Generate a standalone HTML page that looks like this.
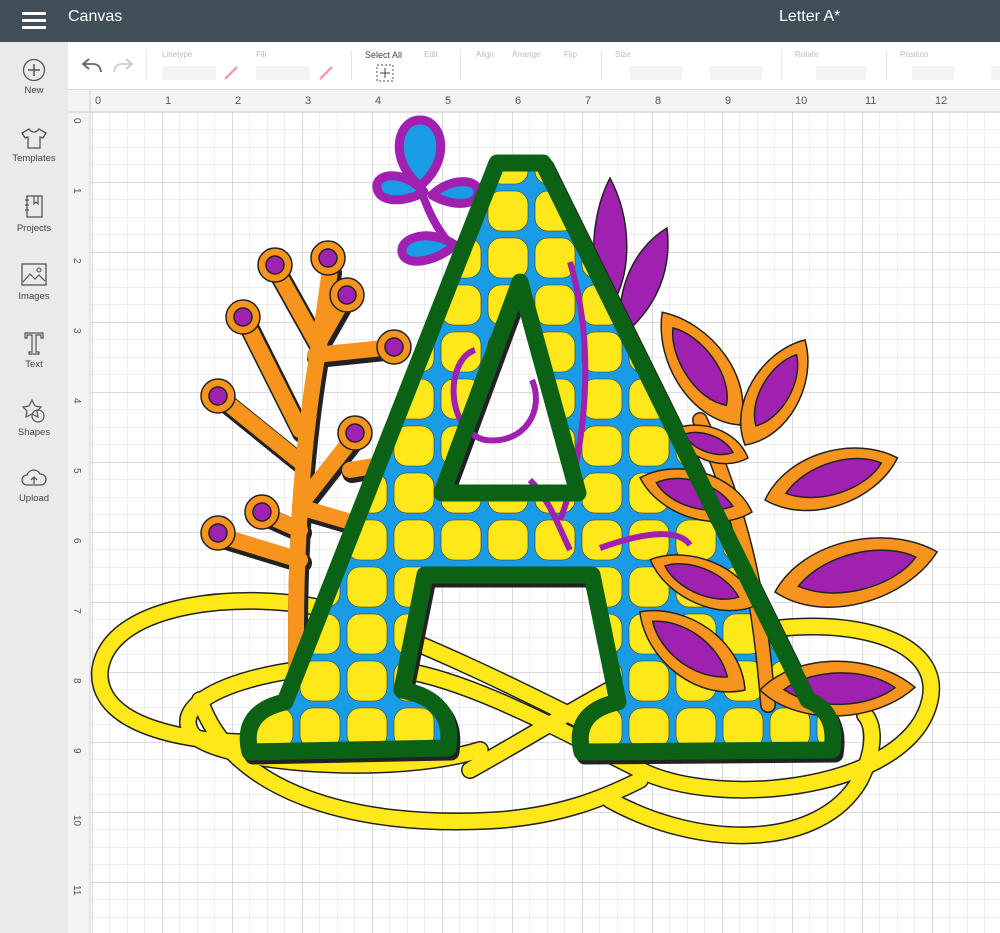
<!DOCTYPE html>
<html><head><meta charset="utf-8">
<style>
*{margin:0;padding:0;box-sizing:border-box}
body{width:1000px;height:933px;overflow:hidden;font-family:"Liberation Sans",sans-serif;background:#fff;position:relative}
#top{position:absolute;left:0;top:0;width:1000px;height:42px;background:#414f58;color:#fff}
#top .ham{position:absolute;left:22px;top:12px;width:24px}
#top .ham i{display:block;height:3px;background:#fff;margin-bottom:4px;border-radius:1px}
#top .t1{position:absolute;left:68px;top:8px;font-size:16px}
#top .t2{position:absolute;left:779px;top:8px;font-size:16px}
#side{position:absolute;left:0;top:42px;width:68px;height:891px;background:#e9eaec}
.si{position:absolute;left:0;width:68px;text-align:center;font-size:9.5px;color:#444}
.si svg{display:block;margin:0 auto 3px}
#tb{position:absolute;left:68px;top:42px;width:932px;height:48px;background:#fff;border-bottom:1px solid #ddd;font-size:8px;color:#bbb}
.lb{position:absolute;top:8px}
.sep{position:absolute;top:8px;width:1px;height:30px;background:#e6e6e6}
.box{position:absolute;top:24px;height:14px;background:#f3f3f3}
</style></head><body>
<div id="top"><div class="ham"><i></i><i></i><i></i></div><div class="t1">Canvas</div><div class="t2">Letter A*</div></div>
<div id="side">
<div class="si" style="top:16px"><svg width="24" height="24"><circle cx="12" cy="12" r="10.5" fill="none" stroke="#555" stroke-width="1.3"/><path d="M12 6v12M6 12h12" stroke="#555" stroke-width="1.5"/></svg>New</div>
<div class="si" style="top:84px"><svg width="28" height="24"><path d="M9 3l-7 4 3 5 3-1v11h12V11l3 1 3-5-7-4q-2 3-5 3t-5-3z" fill="none" stroke="#555" stroke-width="1.3"/></svg>Templates</div>
<div class="si" style="top:152px"><svg width="24" height="26"><rect x="5" y="2" width="15" height="21" fill="none" stroke="#555" stroke-width="1.3"/><path d="M3 6h4M3 11h4M3 16h4M12 2v8l2-2 2 2V2" fill="none" stroke="#555" stroke-width="1.2"/></svg>Projects</div>
<div class="si" style="top:220px"><svg width="28" height="26"><rect x="2" y="2" width="24" height="21" fill="none" stroke="#555" stroke-width="1.3"/><path d="M3 20l7-8 5 5 4-4 6 6" fill="none" stroke="#555" stroke-width="1.2"/><circle cx="19" cy="8" r="2" fill="none" stroke="#555"/></svg>Images</div>
<div class="si" style="top:288px"><svg width="24" height="26"><path d="M3 3h18v5h-2V5h-5v17h3v2H7v-2h3V5H5v3H3z" fill="none" stroke="#555" stroke-width="1.2"/></svg>Text</div>
<div class="si" style="top:356px"><svg width="26" height="26"><path d="M11 2l3 6 6 1-4 4 1 6-6-3-6 3 1-6-4-4 6-1z" fill="none" stroke="#555" stroke-width="1.2"/><circle cx="17" cy="18" r="6" fill="none" stroke="#555" stroke-width="1.2"/></svg>Shapes</div>
<div class="si" style="top:424px"><svg width="28" height="24"><path d="M7 19a5 5 0 010-10 7 7 0 0113-1 5 5 0 011 11z" fill="none" stroke="#555" stroke-width="1.3"/><path d="M14 18v-7M11 14l3-3 3 3" fill="none" stroke="#555" stroke-width="1.3"/></svg>Upload</div>
</div>
<div id="tb">
<svg style="position:absolute;left:13px;top:13px" width="22" height="20"><path d="M8 4L2 9l6 5M2 9h10q7 0 8 8" fill="none" stroke="#666" stroke-width="1.8"/></svg>
<svg style="position:absolute;left:44px;top:13px" width="22" height="20"><path d="M14 4l6 5-6 5M20 9H10q-7 0-8 8" fill="none" stroke="#ccc" stroke-width="1.8"/></svg>
<div class="sep" style="left:78px"></div>
<div class="lb" style="left:94px">Linetype</div><div class="box" style="left:94px;width:54px"></div>
<svg style="position:absolute;left:154px;top:22px" width="18" height="18"><path d="M3 15L15 3" stroke="#f19ab0" stroke-width="2.5"/></svg>
<div class="lb" style="left:188px">Fill</div><div class="box" style="left:188px;width:54px"></div>
<svg style="position:absolute;left:249px;top:22px" width="18" height="18"><path d="M3 15L15 3" stroke="#f19ab0" stroke-width="2.5"/></svg>
<div class="sep" style="left:283px"></div>
<div class="lb" style="left:297px;color:#444;font-size:9px">Select All</div>
<svg style="position:absolute;left:308px;top:22px" width="18" height="18"><rect x="1" y="1" width="16" height="16" fill="none" stroke="#555" stroke-dasharray="2 2"/><path d="M9 4v10M4 9h10" stroke="#444"/></svg>
<div class="lb" style="left:356px">Edit</div>
<div class="sep" style="left:392px"></div>
<div class="lb" style="left:408px">Align</div><div class="lb" style="left:444px">Arrange</div><div class="lb" style="left:496px">Flip</div>
<div class="sep" style="left:533px"></div>
<div class="lb" style="left:547px">Size</div><div class="box" style="left:562px;width:52px"></div><div class="box" style="left:642px;width:52px"></div>
<div class="sep" style="left:713px"></div>
<div class="lb" style="left:727px">Rotate</div><div class="box" style="left:748px;width:50px"></div>
<div class="sep" style="left:818px"></div>
<div class="lb" style="left:832px">Position</div><div class="box" style="left:844px;width:42px"></div><div class="box" style="left:923px;width:9px"></div>
</div>
<svg style="position:absolute;left:68px;top:90px" width="932" height="843" viewBox="68 90 932 843">
<defs>
<pattern id="mn" x="92" y="112" width="17.5" height="17.5" patternUnits="userSpaceOnUse"><path d="M0 0V17.5M0 0H17.5" stroke="#dedede" stroke-width="1" fill="none"/></pattern>
<pattern id="mj" x="92" y="112" width="70" height="70" patternUnits="userSpaceOnUse"><path d="M0 0V70M0 0H70" stroke="#c4c4c4" stroke-width="1.3" fill="none"/></pattern>
<pattern id="yp" x="438" y="188" width="47" height="47" patternUnits="userSpaceOnUse"><rect width="47" height="47" fill="#1a9be6"/><rect x="3" y="3" width="40" height="40" rx="13" fill="#ffe81a" stroke="#333" stroke-width="0.6"/></pattern>
<path id="Aout" d="M497 163 L543 163 L808 700 Q838 712 832 750 L582 752 Q572 712 618 702 L592 575 L425 575 L402 690 Q455 700 448 748 L250 752 Q240 712 285 702 Z M520 282 L578 493 L442 493 Z"/>
</defs>
<rect x="68" y="90" width="932" height="843" fill="#f4f4f4"/>
<rect x="90" y="112" width="910" height="821" fill="#fff"/>
<rect x="90" y="112" width="910" height="821" fill="url(#mn)"/>
<rect x="90" y="112" width="910" height="821" fill="url(#mj)"/>
<line x1="68" y1="112" x2="1000" y2="112" stroke="#ccc"/><line x1="90" y1="90" x2="90" y2="933" stroke="#ccc"/>
<g font-size="11" fill="#555" font-family="Liberation Sans">
<text x="95" y="104">0</text><text x="165" y="104">1</text><text x="235" y="104">2</text><text x="305" y="104">3</text><text x="375" y="104">4</text><text x="445" y="104">5</text><text x="515" y="104">6</text><text x="585" y="104">7</text><text x="655" y="104">8</text><text x="725" y="104">9</text><text x="795" y="104">10</text><text x="865" y="104">11</text><text x="935" y="104">12</text>
</g>
<g font-size="10" fill="#555" font-family="Liberation Sans">
<text transform="translate(74,118) rotate(90)">0</text><text transform="translate(74,188) rotate(90)">1</text><text transform="translate(74,258) rotate(90)">2</text><text transform="translate(74,328) rotate(90)">3</text><text transform="translate(74,398) rotate(90)">4</text><text transform="translate(74,468) rotate(90)">5</text><text transform="translate(74,538) rotate(90)">6</text><text transform="translate(74,608) rotate(90)">7</text><text transform="translate(74,678) rotate(90)">8</text><text transform="translate(74,748) rotate(90)">9</text><text transform="translate(74,815) rotate(90)">10</text><text transform="translate(74,885) rotate(90)">11</text>
</g>
<g fill="none" stroke-linecap="round">
<g stroke="#222" stroke-width="18">
<path d="M480 750 C380 780 200 760 190 730 C170 690 300 655 400 670 C470 680 560 730 640 770 C720 810 910 790 930 700 C945 630 820 610 720 640 C650 660 560 720 470 770"/>
<path d="M330 610 C250 590 110 600 100 670 C95 730 200 745 270 742"/>
<path d="M200 700 C230 790 350 830 500 820 C560 815 600 800 640 780"/>
<path d="M610 800 C700 850 820 850 860 780 C880 740 870 720 865 715"/>
<path d="M330 610 C420 640 520 690 580 720"/>
</g>
<g stroke="#ffe81a" stroke-width="15">
<path d="M480 750 C380 780 200 760 190 730 C170 690 300 655 400 670 C470 680 560 730 640 770 C720 810 910 790 930 700 C945 630 820 610 720 640 C650 660 560 720 470 770"/>
<path d="M330 610 C250 590 110 600 100 670 C95 730 200 745 270 742"/>
<path d="M200 700 C230 790 350 830 500 820 C560 815 600 800 640 780"/>
<path d="M610 800 C700 850 820 850 860 780 C880 740 870 720 865 715"/>
<path d="M330 610 C420 640 520 690 580 720"/>
</g>
</g>
<g stroke-linecap="round" fill="none">
<g stroke="#222" stroke-width="20" transform="translate(2,3)">
<path d="M300 745 C290 600 300 450 320 340 L330 270 M320 340 L345 296 M318 345 L275 268 M300 430 L245 320 M315 355 L393 347 M298 460 L220 397 M300 560 L218 535 M300 530 L262 513 M300 505 L355 435 M350 470 L410 460 M310 510 L395 535 M300 680 L364 612"/>
</g>
<g stroke="#f7941d" stroke-width="16">
<path d="M300 745 C290 600 300 450 320 340 L330 270 M320 340 L345 296 M318 345 L275 268 M300 430 L245 320 M315 355 L393 347 M298 460 L220 397 M300 560 L218 535 M300 530 L262 513 M300 505 L355 435 M350 470 L410 460 M310 510 L395 535 M300 680 L364 612"/>
</g>
</g>
<g stroke="#222" stroke-width="1.5">
<g fill="#f7941d"><circle cx="275" cy="265" r="17"/><circle cx="328" cy="258" r="17"/><circle cx="347" cy="295" r="17"/><circle cx="243" cy="317" r="17"/><circle cx="394" cy="347" r="17"/><circle cx="218" cy="396" r="17"/><circle cx="355" cy="433" r="17"/><circle cx="410" cy="460" r="17"/><circle cx="218" cy="533" r="17"/><circle cx="262" cy="512" r="17"/><circle cx="397" cy="533" r="17"/><circle cx="365" cy="611" r="17"/></g>
<g fill="#a020b0"><circle cx="275" cy="265" r="9"/><circle cx="328" cy="258" r="9"/><circle cx="347" cy="295" r="9"/><circle cx="243" cy="317" r="9"/><circle cx="394" cy="347" r="9"/><circle cx="218" cy="396" r="9"/><circle cx="355" cy="433" r="9"/><circle cx="410" cy="460" r="9"/><circle cx="218" cy="533" r="9"/><circle cx="262" cy="512" r="9"/><circle cx="397" cy="533" r="9"/><circle cx="365" cy="611" r="9"/></g>
</g>
<path d="M420 188 C430 215 440 240 470 262 C452 272 440 288 440 305" fill="none" stroke="#a020b0" stroke-width="8"/>
<g fill="#1a9be6" stroke="#a020b0" stroke-width="9" stroke-linejoin="round">
<path d="M420 186 C388 160 397 120 420 120 C443 120 452 160 420 186Z"/>
<path d="M424 192 C405 170 375 172 377 188 C379 203 405 203 424 192Z"/>
<path d="M432 195 C450 177 480 178 478 193 C476 207 450 206 432 195Z"/>
<path d="M455 245 C430 228 400 237 402 252 C404 267 435 263 455 245Z"/>
<path d="M472 282 C480 258 505 245 513 260 C520 275 495 288 472 282Z"/>
</g>
<path d="M610 178 C588 220 588 285 612 305 C632 272 632 220 610 178Z" fill="#a020b0" stroke="#222" stroke-width="1.5"/>
<path d="M667 228 C630 250 613 300 623 335 C657 307 672 270 667 228Z" fill="#a020b0" stroke="#222" stroke-width="1.5"/>
<use href="#Aout" transform="translate(3,4)" fill="#222" stroke="#222" stroke-width="17" stroke-linejoin="round" fill-rule="evenodd"/>
<use href="#Aout" fill="url(#yp)" fill-rule="evenodd"/>
<g fill="none" stroke="#a020b0" stroke-width="6">
<path d="M475 350 C445 360 445 430 485 440 C525 445 545 410 532 380"/>
<path d="M560 520 C580 470 600 360 570 262"/>
<path d="M600 548 C650 530 680 530 690 545"/>
<path d="M530 480 C550 500 560 530 570 550"/>
</g>
<path d="M768 705 C760 600 745 520 700 420" fill="none" stroke="#222" stroke-width="16" stroke-linecap="round"/>
<path d="M768 705 C760 600 745 520 700 420" fill="none" stroke="#f7941d" stroke-width="13" stroke-linecap="round"/>
<g stroke="#222" stroke-width="1.5">
<g transform="translate(740,425) rotate(-124.6)"><path d="M0 0 C30 -38 100 -35 137 0 C100 35 30 38 0 0Z" fill="#f7941d"/><path d="M24 0 C45 -22 95 -20 118 0 C95 20 45 22 24 0Z" fill="#a020b0"/></g>
<g transform="translate(745,445) rotate(-60.3)"><path d="M0 0 C28 -35 90 -32 121 0 C90 32 28 35 0 0Z" fill="#f7941d"/><path d="M22 0 C42 -20 85 -18 104 0 C85 18 42 20 22 0Z" fill="#a020b0"/></g>
<g transform="translate(748,458) rotate(-159.8)"><path d="M0 0 C20 -23 60 -21 81 0 C60 21 20 23 0 0Z" fill="#f7941d"/><path d="M16 0 C30 -12 56 -11 68 0 C56 11 30 12 16 0Z" fill="#a020b0"/></g>
<g transform="translate(765,500) rotate(-17.6)"><path d="M0 0 C35 -38 105 -35 139 0 C105 35 35 38 0 0Z" fill="#f7941d"/><path d="M22 0 C50 -22 100 -20 122 0 C100 20 50 22 22 0Z" fill="#a020b0"/></g>
<g transform="translate(752,512) rotate(-163)"><path d="M0 0 C28 -32 88 -30 117 0 C88 30 28 32 0 0Z" fill="#f7941d"/><path d="M20 0 C42 -18 82 -17 100 0 C82 17 42 18 20 0Z" fill="#a020b0"/></g>
<g transform="translate(775,592) rotate(-13.9)"><path d="M0 0 C40 -44 125 -40 167 0 C125 40 40 44 0 0Z" fill="#f7941d"/><path d="M24 0 C58 -26 118 -23 145 0 C118 23 58 26 24 0Z" fill="#a020b0"/></g>
<g transform="translate(757,605) rotate(-157)"><path d="M0 0 C28 -31 88 -28 116 0 C88 28 28 31 0 0Z" fill="#f7941d"/><path d="M20 0 C42 -18 82 -16 100 0 C82 16 42 18 20 0Z" fill="#a020b0"/></g>
<g transform="translate(745,690) rotate(-143.4)"><path d="M0 0 C32 -38 98 -35 131 0 C98 35 32 38 0 0Z" fill="#f7941d"/><path d="M22 0 C48 -22 92 -20 115 0 C92 20 48 22 22 0Z" fill="#a020b0"/></g>
<g transform="translate(760,690) rotate(-1)"><path d="M0 0 C38 -38 115 -35 155 0 C115 35 38 38 0 0Z" fill="#f7941d"/><path d="M24 0 C55 -22 108 -20 135 0 C108 20 55 22 24 0Z" fill="#a020b0"/></g>
</g>
<use href="#Aout" fill="none" stroke="#0b6114" stroke-width="17" stroke-linejoin="round"/>
</svg>
</body></html>
